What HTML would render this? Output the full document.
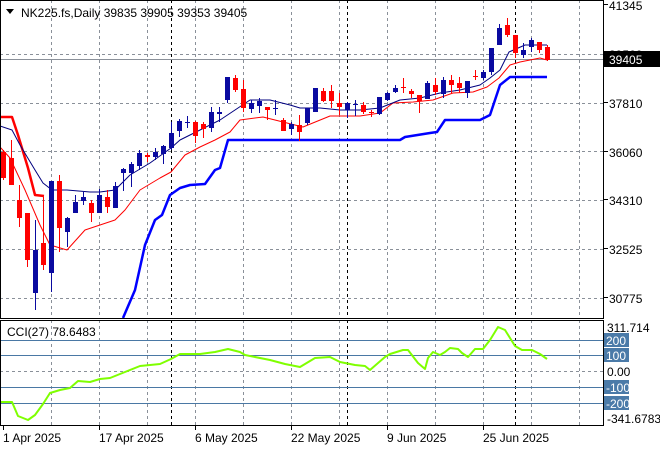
<!DOCTYPE html>
<html><head><meta charset="utf-8">
<style>
html,body{margin:0;padding:0;background:#fff;width:660px;height:450px;overflow:hidden}
svg{display:block;font-family:"Liberation Sans",sans-serif}
</style></head><body>
<svg id="s" width="660" height="450" xmlns="http://www.w3.org/2000/svg">
<rect width="660" height="450" fill="#fff"/>
<g id="grid"></g>
<g id="ind"></g>
<g id="c"></g>
<g id="ov"></g>
</svg>
<script>
var NS="http://www.w3.org/2000/svg";
function el(p,t,a,txt){var e=document.createElementNS(NS,t);for(var k in a)e.setAttribute(k,a[k]);if(txt!=null)e.textContent=txt;document.getElementById(p).appendChild(e);return e;}
// vertical grid
for(var x=3;x<=603;x+=48){
 if(x>3){el("grid","line",{x1:x+.5,y1:0,x2:x+.5,y2:318,stroke:"#8a9099","stroke-dasharray":"3,3"});
 el("grid","line",{x1:x+.5,y1:320,x2:x+.5,y2:425,stroke:"#8a9099","stroke-dasharray":"3,3"});}
}
[171,347,515].forEach(function(x){
 el("grid","line",{x1:x+.5,y1:0,x2:x+.5,y2:318,stroke:"#000","stroke-dasharray":"3,3"});
 el("grid","line",{x1:x+.5,y1:320,x2:x+.5,y2:425,stroke:"#000","stroke-dasharray":"3,3"});
});
[54,103,151,200,249,298].forEach(function(y){
 el("grid","line",{x1:0,y1:y+.5,x2:603,y2:y+.5,stroke:"#8a9099","stroke-dasharray":"3,3"});
});
el("grid","line",{x1:0,y1:59.5,x2:603,y2:59.5,stroke:"#8a9099"});
// CCI levels
[340,355,387,403].forEach(function(y){el("grid","line",{x1:0,y1:y+.5,x2:603,y2:y+.5,stroke:"#4a78a4"});});
el("grid","line",{x1:0,y1:371.5,x2:603,y2:371.5,stroke:"#8a9099","stroke-dasharray":"3,3"});
function pl(pts,col,w){el("ind","polyline",{points:pts,fill:"none",stroke:col,"stroke-width":w,"stroke-linejoin":"round"});}
pl("0,117 12,117 18,135 28,168 35,195 44,196","#ff0000",2.5);
pl("0,147 10,158 25,190 40,225 50,245 67,250 85,230 100,225 115,220 125,210 140,190 160,178 171,172 185,155 200,147 215,140 230,132 240,120 263,117 303,127 330,116 360,116 380,113 393,103 413,102 433,100 453,93 473,92 487,87 499,78 510,65 520,62 530,60 540,58 547,60","#ff0000",1);
pl("0,126 12,130 20,145 35,170 43,183 52,190 67,190 90,192 100,192 115,190 130,175 150,163 171,148 180,140 200,130 220,120 235,110 250,100 270,100 290,105 300,108 320,108 340,110 360,110 380,108 400,100 420,98 440,93 460,90 480,85 490,78 500,70 509,52 525,45 547,45","#00007f",1);
pl("123,318 135,290 145,245 155,220 162,215 170,195 180,188 190,185 205,184 215,170 220,168 228,140 400,140 405,137 430,133 437,132 445,120 480,120 490,115 495,100 500,85 510,77 547,77","#0000ff",2.5);
pl("0,402 12,402 18,416 28,420 35,415 43,404 50,393 60,390 70,388 78,381 90,382 100,379 110,378 125,372 140,366 160,364 171,359 180,354 200,354 215,352 228,349 240,352 245,355 270,360 285,364 300,367 315,358 330,357 340,362 355,365 365,366 370,370 385,357 390,354 403,350 408,350 418,363 425,369 428,358 433,352 440,355 445,352 450,348 458,349 462,353 468,357 475,349 483,349 490,340 498,327 505,330 515,346 522,350 532,350 540,354 547,359","#7fff00",2);
// candles: [dir, bodyTop, bodyBot, wickTop, wickBot]
var C=[
[0,152,178,150,180],[0,158,185,140,185],[0,200,218,185,227],[0,213,260,213,267],[1,250,293,220,310],[0,243,265,197,270],[1,181,273,181,292],[0,181,228,175,252],[1,218,232,217,247],[1,202,213,195,213],
[1,197,201,192,205],[0,203,213,200,222],[1,195,213,189,213],[0,197,207,190,213],[1,186,208,182,208],[1,169,173,168,191],[1,164,173,162,187],[1,153,166,150,170],[0,155,157,153,162],[1,152,157,148,160],
[1,146,154,145,164],[1,133,148,122,150],[1,121,131,119,137],[1,122,123,116,128],[0,122,136,121,143],[0,124,129,122,138],[1,112,128,107,132],[1,112,114,107,122],[1,77,100,77,103],[0,78,90,75,92],
[0,89,108,80,112],[1,103,109,100,113],[1,101,106,98,113],[0,107,110,107,120],[1,108,109,100,115],[0,120,131,118,131],[1,124,129,122,135],[0,125,132,115,141],[1,108,123,108,125],[1,88,112,88,112],
[0,91,101,88,102],[0,91,101,85,108],[0,103,107,93,115],[1,103,110,102,118],[1,104,105,100,116],[0,105,112,102,114],[0,112,113,110,117],[1,97,114,97,115],[1,93,100,92,101],[1,88,92,85,93],
[0,87,88,78,93],[0,91,94,89,98],[0,95,101,95,113],[1,83,99,81,99],[0,85,92,78,95],[1,80,94,77,98],[0,80,85,75,93],[0,83,88,77,93],[1,81,93,81,98],[0,76,77,70,80],
[1,72,78,70,80],[1,48,72,48,75],[1,28,45,24,45],[0,25,35,18,37],[0,35,53,35,58],[1,50,55,43,58],[1,40,47,38,52],[0,42,50,42,53],[0,47,60,45,61]];
C.forEach(function(c,i){var x=Math.round(3.3+8*i);var col=c[0]?"#0000b4":"#ff0000";if(c[0]==1)col="#0a0aa0";
 el("c","line",{x1:x+.5,y1:c[3],x2:x+.5,y2:c[4],stroke:col,"stroke-width":1});
 var h=Math.max(c[2]-c[1],1);
 el("c","rect",{x:x-2,y:c[1],width:5,height:h,fill:col});
});
// borders
el("ov","rect",{x:0.5,y:0.5,width:603,height:318,fill:"none",stroke:"#000"});
el("ov","rect",{x:0.5,y:320.5,width:603,height:105,fill:"none",stroke:"#000"});
// header
el("ov","path",{d:"M6 9 L14 9 L10 14 Z",fill:"#000"});
el("ov","text",{x:21,y:17,"font-size":12,fill:"#000"},"NK225.fs,Daily  39835 39905 39353 39405");
el("ov","text",{x:7,y:336,"font-size":12,fill:"#000"},"CCI(27) 78.6483");
// right axis
var R=[[41345,9],[37810,107],[36060,156],[34310,204],[32525,253],[30775,302]];
R.forEach(function(r){el("ov","line",{x1:604,y1:r[1]-4.5,x2:608,y2:r[1]-4.5,stroke:"#000"});el("ov","text",{x:609,y:r[1]+1,"font-size":12,fill:"#000"},r[0]);});
el("ov","text",{x:609,y:59,"font-size":12,fill:"#000"},"39560");
el("ov","rect",{x:604,y:51,width:56,height:16,fill:"#000"});
el("ov","text",{x:609,y:64,"font-size":12,fill:"#fff"},"39405");
el("ov","text",{x:607,y:332,"font-size":12,fill:"#000"},"311.714");
[["200",340],["100",355],["-100",387],["-200",403]].forEach(function(r){
 el("ov","rect",{x:604,y:r[1]-7,width:25,height:14,fill:"#4a7aa8"});
 el("ov","text",{x:606,y:r[1]+5,"font-size":12,fill:"#fff"},r[0]);});
el("ov","text",{x:607,y:376,"font-size":12,fill:"#000"},"0.00");
el("ov","text",{x:607,y:423,"font-size":12,fill:"#000"},"-341.6783");
// dates
[["1 Apr 2025",3],["17 Apr 2025",99],["6 May 2025",195],["22 May 2025",291],["9 Jun 2025",387],["25 Jun 2025",483]].forEach(function(d){
 el("ov","line",{x1:d[1]+.5,y1:426,x2:d[1]+.5,y2:430,stroke:"#000"});
 el("ov","text",{x:d[1],y:442,"font-size":12,fill:"#000"},d[0]);});
</script>
</body></html>
